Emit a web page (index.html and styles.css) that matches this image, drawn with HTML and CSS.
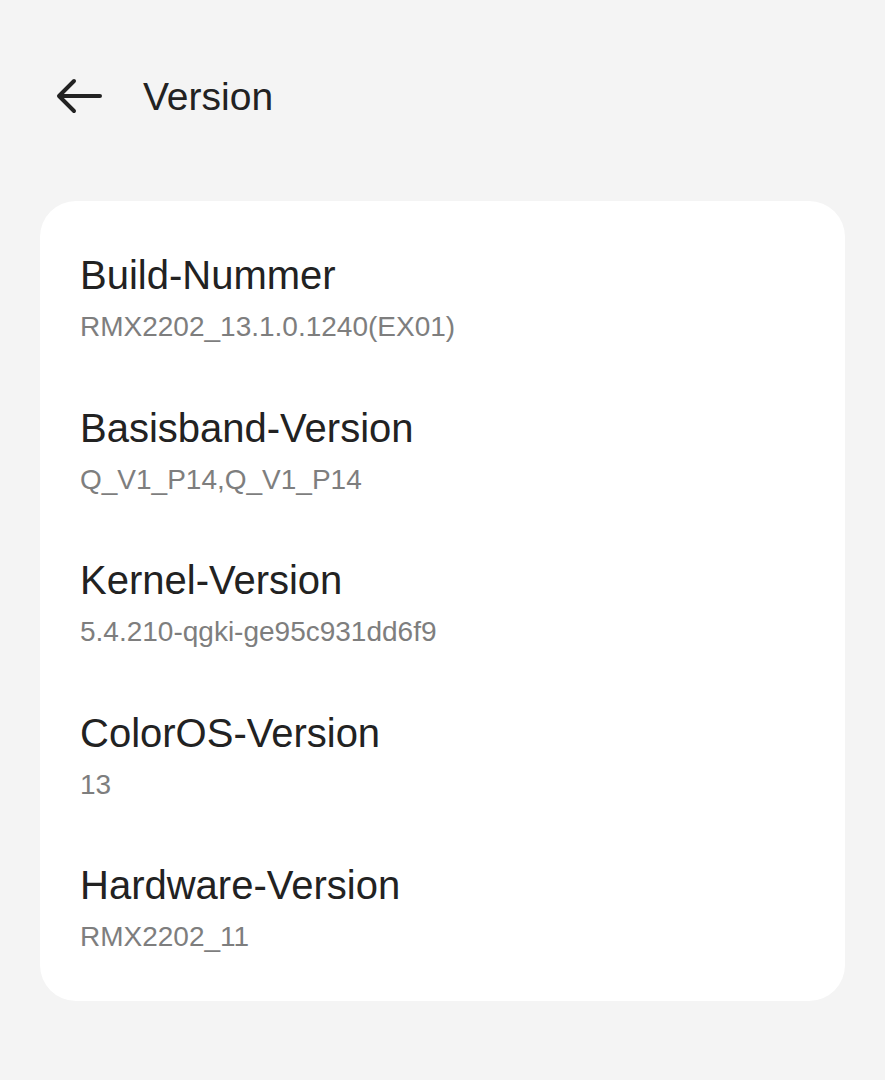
FILE: index.html
```html
<!DOCTYPE html>
<html>
<head>
<meta charset="utf-8">
<link rel="stylesheet" href="styles.css">
</head>
<body>
<div class="page">
  <header class="topbar">
    <span class="back">
      <svg width="46" height="36" viewBox="0 0 46 36"><path d="M44 18H4M18 3L3 18l15 15" fill="none" stroke="#222" stroke-width="4" stroke-linecap="round" stroke-linejoin="round"/></svg>
    </span>
    <h1 class="title">Version</h1>
  </header>
  <section class="card">
    <div class="row"><div class="label">Build-Nummer</div><div class="value">RMX2202_13.1.0.1240(EX01)</div></div>
    <div class="row"><div class="label">Basisband-Version</div><div class="value">Q_V1_P14,Q_V1_P14</div></div>
    <div class="row"><div class="label">Kernel-Version</div><div class="value">5.4.210-qgki-ge95c931dd6f9</div></div>
    <div class="row"><div class="label">ColorOS-Version</div><div class="value">13</div></div>
    <div class="row"><div class="label">Hardware-Version</div><div class="value">RMX2202_11</div></div>
  </section>
</div>
</body>
</html>
```
FILE: styles.css
```css
html, body {
  margin: 0;
  padding: 0;
  background: #f4f4f4;
}
body {
  font-family: "Liberation Sans", Arial, sans-serif;
  color: #222;
}
.page {
  width: 885px;
  height: 1080px;
  box-sizing: border-box;
  padding: 0 40px;
}
.topbar {
  display: flex;
  align-items: flex-start;
  height: 192px;
  box-sizing: border-box;
  padding: 78px 0 0 16px;
  margin: 0;
}
.back {
  display: flex;
  width: 46px;
  height: 36px;
}
.title {
  margin: 0 0 0 41px;
  font-size: 39px;
  font-weight: 400;
  line-height: 38px;
  color: #222;
}
.card {
  background: #fff;
  border-radius: 36px;
  margin-top: 9px;
  padding: 22px 0 16px 40px;
  height: 800px;
  box-sizing: border-box;
}
.row {
  padding: 28px 0 28.5px;
}
.label {
  font-size: 40px;
  line-height: 48px;
  color: #222;
}
.value {
  margin-top: 8px;
  font-size: 28px;
  line-height: 40px;
  color: #7e7e7e;
}
```
